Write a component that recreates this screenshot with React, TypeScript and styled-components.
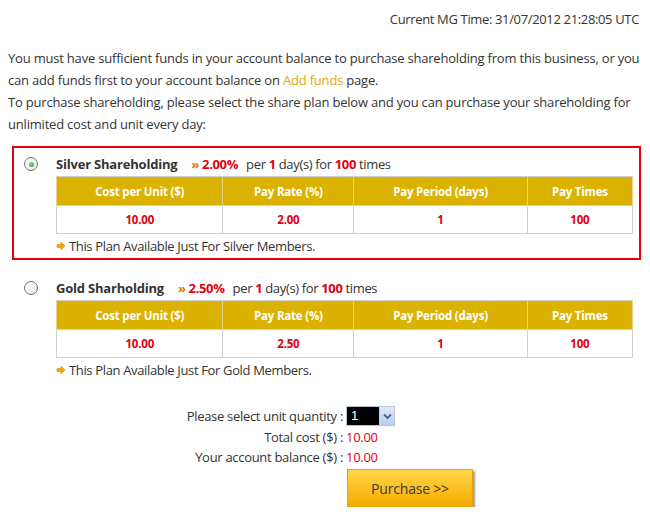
import React from "react";
import styled, { createGlobalStyle } from "styled-components";

const Global = createGlobalStyle`
  html, body { margin: 0; padding: 0; background: #fff; }
  body { font-family: "Open Sans", "Liberation Sans", sans-serif; color: #333; }
`;

const Page = styled.div`
  width: 650px;
  padding: 8px 8px 0 8px;
  box-sizing: border-box;
  font-size: 13px;
  letter-spacing: -0.35px;
`;

const TimeLine = styled.div`
  text-align: right;
  line-height: 22px;
  padding-right: 3px;
`;

const Intro = styled.p`
  margin: 17px 0 11px 0;
  line-height: 22px;
  letter-spacing: -0.2px;
`;

const Link = styled.a`
  color: #e8a800;
  text-decoration: none;
`;

const Plans = styled.div`
  display: flex;
  flex-direction: column;
  gap: 10px;
  margin: 0 1px 0 4px;
`;

const Plan = styled.div<{ $selected?: boolean }>`
  display: flex;
  border: 2px solid ${(p) => (p.$selected ? "#e8000b" : "transparent")};
  padding: 6px 6px 6px 0;
  height: 114px;
  box-sizing: border-box;
`;

const RadioCol = styled.div`
  width: 42px;
  box-sizing: border-box;
  display: flex;
  justify-content: flex-start;
  padding: 3px 0 0 10px;
`;

const Radio = styled.span<{ $checked?: boolean }>`
  width: 12px;
  height: 12px;
  border-radius: 50%;
  border: 1px solid #6f7780;
  background: radial-gradient(circle at 40% 35%, #ffffff 0%, #eef0f2 55%, #d3d7dc 100%);
  display: flex;
  align-items: center;
  justify-content: center;
  &::after {
    content: "";
    width: 5px;
    height: 5px;
    border-radius: 50%;
    background: ${(p) => (p.$checked ? "radial-gradient(circle at 40% 35%, #8be08b, #1c9a2a)" : "transparent")};
  }
`;

const Body = styled.div`
  flex: 1;
  display: flex;
  flex-direction: column;
`;

const TitleRow = styled.div`
  line-height: 20px;
  white-space: nowrap;
`;

const PlanName = styled.span`
  font-weight: 700;
  color: #333;
  margin-right: 14px;
  letter-spacing: -0.2px;
`;

const Chevron = styled.span`
  color: #e87400;
  font-weight: 700;
  margin-right: 3px;
`;

const Red = styled.span`
  color: #e2000f;
  font-weight: 700;
`;

const Rate = styled(Red)`
  margin-right: 5px;
`;

const Table = styled.table`
  margin-top: 2px;
  width: 577px;
  border-collapse: collapse;
  font-size: 11.5px;
  font-weight: 700;
  text-align: center;
  letter-spacing: -0.2px;
`;

const Th = styled.th<{ $w: number }>`
  width: ${(p) => p.$w}px;
  height: 28px;
  padding: 0;
  background: #dbb200;
  color: #fff;
  border: 1px solid #e6d28a;
  border-top-color: #d0d0d0;
  font-weight: 700;
`;

const Td = styled.td`
  height: 27px;
  padding: 0;
  color: #e2000f;
  border: 1px solid #cfcfcf;
`;

const Note = styled.div`
  margin-top: 4px;
  line-height: 16px;
  display: flex;
  align-items: center;
  gap: 3px;
`;

const Form = styled.div`
  margin-top: 21px;
  display: grid;
  grid-template-columns: 335px auto;
  column-gap: 3px;
  align-items: center;
  letter-spacing: -0.3px;
`;

const Label = styled.div`
  text-align: right;
  line-height: 20px;
`;

const Value = styled.div`
  color: #e2000f;
  line-height: 20px;
`;

const Select = styled.div`
  display: flex;
  width: 49px;
  height: 20px;
  box-sizing: border-box;
  border: 1px solid #b9c4d4;
  margin: 1px 0;
`;

const SelectValue = styled.div`
  flex: 1;
  background: #000;
  color: #fff;
  font-family: "Liberation Sans", Arial, sans-serif;
  font-size: 13px;
  line-height: 18px;
  padding-left: 4px;
`;

const SelectArrow = styled.div`
  width: 14px;
  background: linear-gradient(#dfe8fb, #b9ccf4);
  border-left: 1px solid #c6d3ee;
  display: flex;
  align-items: center;
  justify-content: center;
`;

const ButtonCell = styled.div`
  grid-column: 2;
  padding: 2px 0 0 1px;
`;

const Button = styled.button`
  width: 126px;
  height: 38px;
  border: 1px solid #e6a400;
  background: linear-gradient(#ffd64a, #fbbd1a 60%, #f6a900);
  box-shadow: 2px 2px 2px #9a9a9a;
  font-family: "Open Sans", "Liberation Sans", sans-serif;
  font-size: 14px;
  color: #3a3a3a;
  letter-spacing: -0.2px;
  padding: 0;
  cursor: pointer;
`;

const NoteArrow = () => (
  <svg width="10" height="10" viewBox="0 0 10 10">
    <path d="M1 3.5 H5 V1 L9 5 L5 9 V6.5 H1 Z" fill="#f5a800" stroke="#e08a00" strokeWidth="0.6" />
  </svg>
);

const DownArrow = () => (
  <svg width="9" height="7" viewBox="0 0 9 7">
    <path d="M1 1.5 L4.5 5 L8 1.5" fill="none" stroke="#4d6185" strokeWidth="1.8" />
  </svg>
);

type PlanData = {
  name: string;
  rate: string;
  payRate: string;
  member: string;
  selected?: boolean;
};

const plans: PlanData[] = [
  { name: "Silver Shareholding", rate: "2.00%", payRate: "2.00", member: "Silver", selected: true },
  { name: "Gold Sharholding", rate: "2.50%", payRate: "2.50", member: "Gold" },
];

const cols: [string, number][] = [
  ["Cost per Unit ($)", 167],
  ["Pay Rate (%)", 131],
  ["Pay Period (days)", 174],
  ["Pay Times", 105],
];

export default function App() {
  return (
    <Page>
      <Global />
      <TimeLine>Current MG Time: 31/07/2012 21:28:05 UTC</TimeLine>
      <Intro>
        <span>
          You must have sufficient funds in your account balance to purchase shareholding from this business, or you
          can add funds first to your account balance on{" "}
        </span>
        <Link href="#">Add funds</Link>
        <span> page.</span>
        <br />
        <span>
          To purchase shareholding, please select the share plan below and you can purchase your shareholding for
          unlimited cost and unit every day:
        </span>
      </Intro>
      <Plans>
        {plans.map((p) => (
          <Plan key={p.name} $selected={p.selected}>
            <RadioCol>
              <Radio $checked={p.selected} />
            </RadioCol>
            <Body>
              <TitleRow>
                <PlanName>{p.name}</PlanName>
                <Chevron>»</Chevron>
                <Rate>{p.rate}</Rate> per <Red>1</Red> day(s) for <Red>100</Red> times
              </TitleRow>
              <Table>
                <thead>
                  <tr>
                    {cols.map(([c, w]) => (
                      <Th key={c} $w={w}>
                        {c}
                      </Th>
                    ))}
                  </tr>
                </thead>
                <tbody>
                  <tr>
                    <Td>10.00</Td>
                    <Td>{p.payRate}</Td>
                    <Td>1</Td>
                    <Td>100</Td>
                  </tr>
                </tbody>
              </Table>
              <Note>
                <NoteArrow />
                This Plan Available Just For {p.member} Members.
              </Note>
            </Body>
          </Plan>
        ))}
      </Plans>
      <Form>
        <Label>Please select unit quantity :</Label>
        <Select>
          <SelectValue>1</SelectValue>
          <SelectArrow>
            <DownArrow />
          </SelectArrow>
        </Select>
        <Label>Total cost ($) :</Label>
        <Value>10.00</Value>
        <Label>Your account balance ($) :</Label>
        <Value>10.00</Value>
        <ButtonCell>
          <Button>Purchase &gt;&gt;</Button>
        </ButtonCell>
      </Form>
    </Page>
  );
}
